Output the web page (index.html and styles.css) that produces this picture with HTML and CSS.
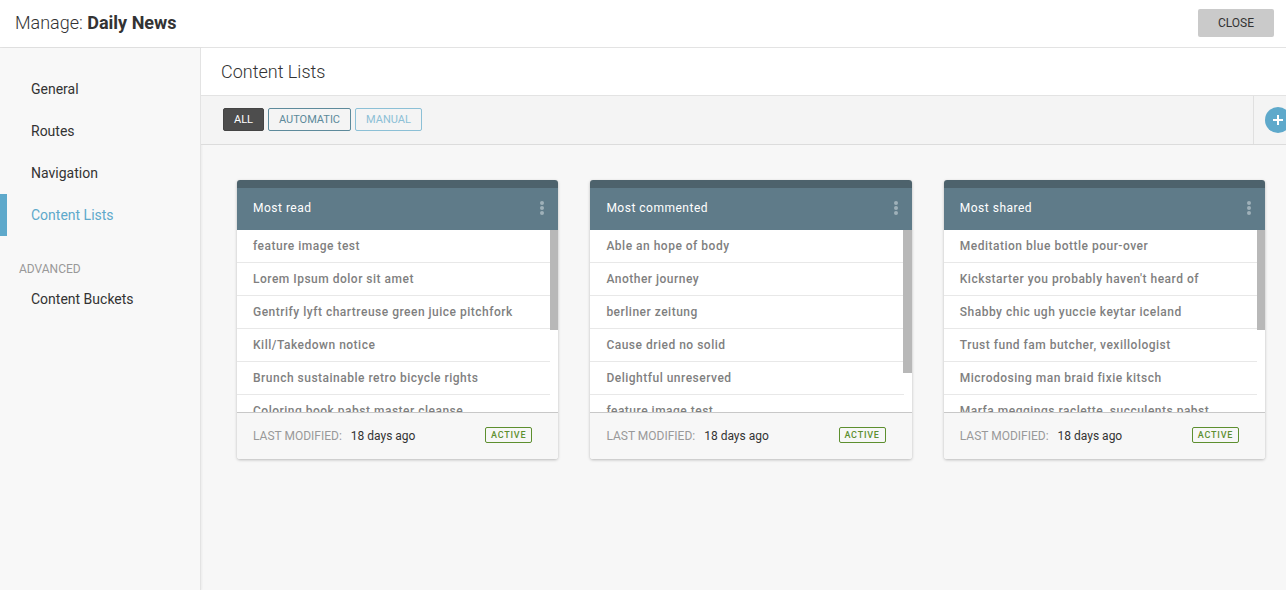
FILE: index.html
```html
<!DOCTYPE html>
<html lang="en">
<head>
    <meta charset="UTF-8">
    <meta name="viewport" content="width=device-width, initial-scale=1.0">
    <title>Manage: Daily News</title>
    <link rel="stylesheet" href="styles.css">
</head>
<body>
    <header class="top-bar">
        <h1 class="top-title">Manage: <strong>Daily News</strong></h1>
        <button class="close-btn" type="button">CLOSE</button>
    </header>
    <div class="layout">
        <nav class="sidebar">
            <ul class="nav-list">
                <li class="nav-item">General</li>
                <li class="nav-item">Routes</li>
                <li class="nav-item">Navigation</li>
                <li class="nav-item active">Content Lists</li>
            </ul>
            <div class="nav-heading">ADVANCED</div>
            <ul class="nav-list">
                <li class="nav-item">Content Buckets</li>
            </ul>
        </nav>
        <main class="main">
            <h2 class="page-title">Content Lists</h2>
            <div class="toolbar">
                <div class="filters">
                    <button class="filter filter-all" type="button">ALL</button>
                    <button class="filter filter-auto" type="button">AUTOMATIC</button>
                    <button class="filter filter-manual" type="button">MANUAL</button>
                </div>
                <div class="add-box">
                    <span class="add-btn">
                        <svg width="12" height="12" viewBox="0 0 12 12"><path d="M6 1v10M1 6h10" stroke="#fff" stroke-width="2"/></svg>
                    </span>
                </div>
            </div>
            <div class="cards">
                <section class="card">
                    <div class="card-head">
                        <span>Most read</span>
                        <span class="dots"><i></i><i></i><i></i></span>
                    </div>
                    <div class="card-body">
                        <ul class="rows">
                            <li>feature image test</li>
                            <li>Lorem Ipsum dolor sit amet</li>
                            <li>Gentrify lyft chartreuse green juice pitchfork</li>
                            <li>Kill/Takedown notice</li>
                            <li>Brunch sustainable retro bicycle rights</li>
                            <li>Coloring book pabst master cleanse</li>
                        </ul>
                        <div class="thumb thumb-short"></div>
                    </div>
                    <div class="card-foot">
                        <span class="mod-label">LAST MODIFIED:</span>
                        <span class="mod-value">18 days ago</span>
                        <span class="badge">ACTIVE</span>
                    </div>
                </section>
                <section class="card">
                    <div class="card-head">
                        <span>Most commented</span>
                        <span class="dots"><i></i><i></i><i></i></span>
                    </div>
                    <div class="card-body">
                        <ul class="rows">
                            <li>Able an hope of body</li>
                            <li>Another journey</li>
                            <li>berliner zeitung</li>
                            <li>Cause dried no solid</li>
                            <li>Delightful unreserved</li>
                            <li>feature image test</li>
                        </ul>
                        <div class="thumb thumb-long"></div>
                    </div>
                    <div class="card-foot">
                        <span class="mod-label">LAST MODIFIED:</span>
                        <span class="mod-value">18 days ago</span>
                        <span class="badge">ACTIVE</span>
                    </div>
                </section>
                <section class="card">
                    <div class="card-head">
                        <span>Most shared</span>
                        <span class="dots"><i></i><i></i><i></i></span>
                    </div>
                    <div class="card-body">
                        <ul class="rows">
                            <li>Meditation blue bottle pour-over</li>
                            <li>Kickstarter you probably haven't heard of</li>
                            <li>Shabby chic ugh yuccie keytar iceland</li>
                            <li>Trust fund fam butcher, vexillologist</li>
                            <li>Microdosing man braid fixie kitsch</li>
                            <li>Marfa meggings raclette, succulents pabst</li>
                        </ul>
                        <div class="thumb thumb-short"></div>
                    </div>
                    <div class="card-foot">
                        <span class="mod-label">LAST MODIFIED:</span>
                        <span class="mod-value">18 days ago</span>
                        <span class="badge">ACTIVE</span>
                    </div>
                </section>
            </div>
        </main>
    </div>
</body>
</html>
```

FILE: styles.css
```css
* {
    box-sizing: border-box;
}

html, body {
    height: 100%;
}

body {
    margin: 0;
    overflow: hidden;
    font-family: Roboto, "Liberation Sans", sans-serif;
    color: #333;
    background-color: #f7f7f7;
}

ul {
    list-style-type: none;
    margin: 0;
    padding: 0;
}

.top-bar {
    height: 48px;
    display: flex;
    align-items: center;
    justify-content: space-between;
    padding: 0 12px 0 15px;
    background-color: #fff;
    border-bottom: 1px solid #e3e3e3;
}

.top-title {
    margin: -2px 0 0;
    font-size: 18px;
    font-weight: 300;
}

.top-title strong {
    font-weight: 700;
}

.close-btn {
    width: 76px;
    height: 28px;
    margin-top: -2px;
    padding: 0;
    border: none;
    border-radius: 2px;
    background-color: #cacaca;
    color: #333;
    font-family: inherit;
    font-size: 12px;
}

.layout {
    display: flex;
    height: 542px;
}

.sidebar {
    flex: 0 0 201px;
    padding-top: 20px;
    background-color: #f8f8f8;
    border-right: 1px solid #e3e3e3;
    box-shadow: 1px 0 2px rgba(0, 0, 0, 0.05);
}

.nav-item {
    height: 42px;
    line-height: 42px;
    padding-left: 31px;
    font-size: 14px;
    color: #333;
}

.nav-item.active {
    color: #5ea9cb;
    border-left: 7px solid #5ea9cb;
    padding-left: 24px;
}

.nav-heading {
    margin: 26px 0 0 19px;
    height: 14px;
    line-height: 14px;
    font-size: 12px;
    color: #999;
}

.nav-heading + .nav-list {
    margin-top: 2px;
}

.main {
    flex: 1;
    min-width: 0;
}

.page-title {
    margin: 0;
    height: 47px;
    line-height: 47px;
    padding-left: 20px;
    font-size: 18px;
    font-weight: 300;
    background-color: #fff;
}

.toolbar {
    height: 50px;
    display: flex;
    justify-content: space-between;
    background-color: #f4f4f4;
    border-top: 1px solid #e3e3e3;
    border-bottom: 1px solid #dcdcdc;
}

.filters {
    display: flex;
    gap: 4px;
    padding: 12px 0 0 22px;
}

.filter {
    height: 23px;
    padding: 0;
    border-radius: 2px;
    background-color: transparent;
    font-family: inherit;
    font-size: 11px;
}

.filter-all {
    width: 41px;
    background-color: #4d4d4d;
    border: 1px solid #444;
    color: #fff;
}

.filter-auto {
    width: 83px;
    border: 1px solid #5d8a9b;
    color: #5d8a9b;
}

.filter-manual {
    width: 67px;
    border: 1px solid #8cc0d6;
    color: #8cc0d6;
}

.add-box {
    width: 33px;
    display: flex;
    align-items: center;
    padding-left: 11px;
    border-left: 1px solid #e0e0e0;
    overflow: hidden;
}

.add-btn {
    flex: none;
    width: 26px;
    height: 26px;
    display: flex;
    align-items: center;
    justify-content: center;
    border-radius: 50%;
    background-color: #5ea9cb;
}

.cards {
    display: flex;
    gap: 32px;
    padding: 35px 0 0 35.8px;
}

.card {
    flex: 0 0 321.4px;
    border-radius: 3px;
    background-color: #fff;
    box-shadow: 0 1px 3px rgba(0, 0, 0, 0.25);
}

.card-head {
    height: 50px;
    display: flex;
    align-items: center;
    justify-content: space-between;
    padding: 0 14px 2px 16.2px;
    border-top: 8px solid #4d626c;
    border-radius: 3px 3px 0 0;
    background-color: #5f7b89;
    color: #fff;
    font-size: 12px;
    letter-spacing: 0.5px;
}

.dots {
    display: flex;
    flex-direction: column;
    gap: 1px;
}

.dots i {
    width: 4px;
    height: 4px;
    border-radius: 50%;
    background-color: #9fb0b9;
}

.card-body {
    position: relative;
    height: 182px;
    overflow: hidden;
}

.rows li {
    height: 33px;
    line-height: 32px;
    margin-right: 8px;
    padding-left: 16.2px;
    border-bottom: 1px solid #e8e8e8;
    font-size: 12px;
    font-weight: 500;
    letter-spacing: 0.5px;
    color: #7f7f7f;
    white-space: nowrap;
}

.thumb {
    position: absolute;
    top: 0;
    right: 0;
    width: 8.2px;
    background-color: #b8b8b8;
}

.thumb-short {
    height: 100px;
}

.thumb-long {
    height: 143px;
}

.card-foot {
    height: 47px;
    display: flex;
    align-items: center;
    padding: 0 26px 0 16.2px;
    border-top: 1px solid #c8c8c8;
    border-radius: 0 0 3px 3px;
    background-color: #f7f7f7;
    font-size: 12px;
}

.mod-label {
    color: #999;
}

.mod-value {
    margin-left: 9px;
    color: #333;
}

.badge {
    margin-left: auto;
    width: 47px;
    height: 16px;
    line-height: 14px;
    margin-top: -2px;
    text-align: center;
    border: 1px solid #5d8f2f;
    border-radius: 2px;
    color: #5d8f2f;
    font-size: 9px;
    font-weight: 500;
    letter-spacing: 0.8px;
}
```
